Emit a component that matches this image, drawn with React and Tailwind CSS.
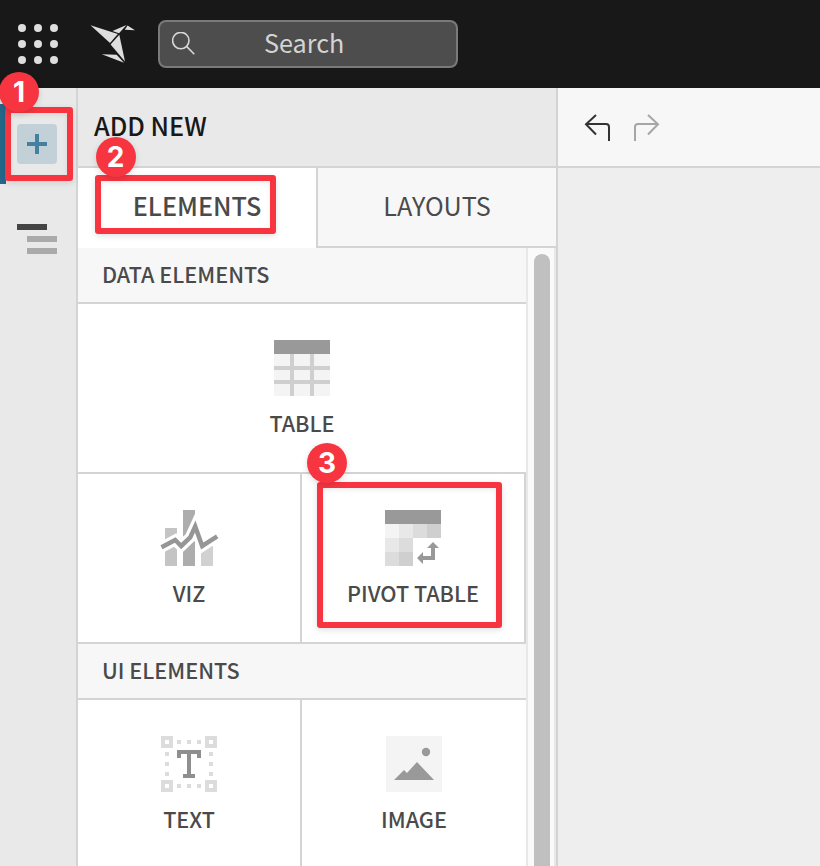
import React from 'react';

const sans = "font-['Noto_Sans_CJK_SC','Noto_Sans',sans-serif]";

function AppGrid() {
  const xs = [22, 38, 54];
  const ys = [28, 44, 60];
  return (
    <svg className="block h-[88px] w-20" viewBox="0 0 80 88" fill="#dedede">
      {ys.map((y) => xs.map((x) => <circle key={x + '-' + y} cx={x} cy={y} r="4" />))}
    </svg>
  );
}

function Bird() {
  return (
    <svg className="h-12 w-12" viewBox="88 20 48 48" fill="#dedede">
      <path d="M90.5 25.2 L117.8 34 L110 43 Z" />
      <path d="M112.5 31 L126.5 25 L119 33.2 Z" />
      <path d="M127.5 25.6 L135 30.2 L124.8 29.8 Z" />
      <path d="M119.3 34.8 L125 61.5 L110.6 44.5 Z" />
      <path d="M101.8 54.3 L116.6 54.8 L124 62.8 Z" />
    </svg>
  );
}

function Badge({ n, className }) {
  return (
    <div className={'absolute z-20 flex size-10 items-center justify-center rounded-full bg-[#f73541] font-[Inter,sans-serif] text-[28px] leading-none font-bold text-white shadow-[0_2px_6px_rgba(0,0,0,0.14)] ' + className}>
      {n}
    </div>
  );
}

function Frame({ className }) {
  return (
    <div className={'absolute z-10 rounded-[3px] shadow-[0_2px_6px_rgba(0,0,0,0.12)] ' + className}>
      <div className="h-full w-full rounded-[3px] border-[6px] border-[#f73541] shadow-[inset_0_2px_5px_rgba(0,0,0,0.08)]" />
    </div>
  );
}

function TableIcon() {
  return (
    <svg className="size-14" viewBox="0 0 56 56" shapeRendering="crispEdges">
      <path fill="#f4f4f4" d="M0 14h56v42H0z" />
      <path fill="#cfcfcf" d="M16 14h4v42h-4zM36 14h4v42h-4zM0 26h56v4H0zM0 40h56v4H0z" />
      <path fill="#999" d="M0 0h56v14H0z" />
    </svg>
  );
}

function VizIcon() {
  return (
    <svg className="size-14 overflow-visible" viewBox="0 0 56 56">
      <path fill="#c4c4c4" d="M4 18h12v38H4z" />
      <path fill="#adadad" d="M22 0h12v56H22z" />
      <path fill="#d1d1d1" d="M40 36h12v20H40z" />
      <path fill="none" stroke="#fff" strokeWidth="11" d="M.2 37.5 14.2 30 20.2 36 29.2 27.5 34.2 16.5 41.2 36 56.5 26" />
      <path fill="none" stroke="#969696" strokeWidth="4.5" d="M.5 37.3 14.2 30 20.2 36 29.2 27.5 34.2 16.5 41.2 36 56.2 26.3" />
    </svg>
  );
}

function PivotIcon() {
  return (
    <svg className="size-14" viewBox="0 0 56 56">
      <path fill="#999" d="M0 0h56v14H0z" />
      <path fill="#f4f4f4" d="M0 14h14v14H0z" />
      <path fill="#e8e8e8" d="M14 14h14v14H14zM0 28h14v14H0z" />
      <path fill="#dcdcdc" d="M28 14h14v14H28zM14 28h14v14H14zM0 42h14v14H0z" />
      <path fill="#cfcfcf" d="M42 14h14v14H42zM14 42h14v14H14z" />
      <path fill="#999" d="M48 32l6 6h-4v12H38v4l-6-6 6-6v4h8V38h-4z" />
    </svg>
  );
}

function TextIcon() {
  return (
    <svg className="size-14" viewBox="0 0 56 56" shapeRendering="crispEdges">
      <path fill="none" stroke="#dcdcdc" strokeWidth="4" d="M2 2h8v8H2zM46 2h8v8h-8zM2 46h8v8H2zM46 46h8v8h-8z" />
      <path fill="#dcdcdc" d="M16 4h4v4h-4zM26 4h4v4h-4zM36 4h4v4h-4zM16 48h4v4h-4zM26 48h4v4h-4zM36 48h4v4h-4zM4 16h4v4H4zM4 26h4v4H4zM4 36h4v4H4zM48 16h4v4h-4zM48 26h4v4h-4zM48 36h4v4h-4z" />
      <path fill="#8f8f8f" d="M16 14h24v8h-4v-4h-6v20h4v4H22v-4h4V18h-6v4h-4z" />
    </svg>
  );
}

function ImageIcon() {
  return (
    <svg className="size-14" viewBox="0 0 56 56">
      <path fill="#f4f4f4" d="M0 0h56v56H0z" />
      <circle cx="40" cy="16" r="4.2" fill="#999" />
      <path fill="#999" d="M8 44 18 34l3 3 10-11 17 18z" />
    </svg>
  );
}

function Cell({ icon, label, className = '' }) {
  return (
    <div className={'flex flex-col items-center bg-white pt-9 ' + className}>
      {icon}
      <span className="mt-[11px] text-[21.6px] leading-8 font-medium whitespace-nowrap">{label}</span>
    </div>
  );
}

function SectionTitle({ children }) {
  return (
    <div className="flex h-14 shrink-0 items-center border-b-2 border-[#d4d4d4] bg-[#f7f7f7] pb-0.5 pl-6 text-[21.6px] leading-8 font-medium">
      {children}
    </div>
  );
}

export default function App() {
  return (
    <div className={'relative flex h-[866px] w-[820px] flex-col overflow-hidden bg-[#eee] text-[#4a4a4a] ' + sans}>
      <header className="flex h-[88px] shrink-0 items-center bg-[#181818]">
        <AppGrid />
        <div className="mr-[22px] ml-2"><Bird /></div>
        <div className="flex h-12 w-[300px] items-center rounded-lg border-2 border-[#7a7a7a] bg-[#4d4d4d]">
          <svg className="ml-3 h-6 w-6" viewBox="0 0 24 24" fill="none" stroke="#d8d8d8" strokeWidth="1.6">
            <circle cx="8.8" cy="8.6" r="8.2" />
            <path d="M14.6 14.4 22.3 22.2" />
          </svg>
          <span className="ml-[68px] pb-1 text-[25.2px] leading-8 text-[#d4d4d4]">Search</span>
        </div>
      </header>

      <div className="flex min-h-0 flex-1">
        <aside className="w-[78px] shrink-0 border-r-2 border-[#d4d4d4] bg-[#e9e9e9] pt-4">
          <div className="flex h-20 items-center border-l-6 border-[#25688b] pl-[11px]">
            <button className="flex size-10 items-center justify-center rounded bg-[#c2d0d8]">
              <svg className="size-5" viewBox="0 0 20 20" fill="#4580a0"><path d="M8 0h4v8h8v4h-8v8H8v-8H0V8h8z" /></svg>
            </button>
          </div>
          <div className="mt-10 ml-[17px] flex w-10 flex-col gap-1.5">
            <div className="h-1.5 w-[30px] bg-[#444]" />
            <div className="ml-2.5 h-1.5 bg-[#aaa]" />
            <div className="ml-2.5 h-1.5 bg-[#aaa]" />
          </div>
        </aside>

        <section className="flex w-[480px] shrink-0 flex-col border-r-2 border-[#d4d4d4]">
          <h2 className="flex h-20 shrink-0 items-center border-b-2 border-[#d4d4d4] bg-[#e9e9e9] pb-1 pl-4 text-[25.2px] leading-8 font-medium text-[#181818]">ADD NEW</h2>
          <div className="flex h-20 shrink-0 text-[25.2px] leading-8">
            <div className="flex w-[238px] items-center justify-center bg-white pb-1.5 font-medium">ELEMENTS</div>
            <div className="flex flex-1 items-center justify-center border-b-2 border-l-2 border-[#d4d4d4] bg-[#f7f7f7] pb-1">LAYOUTS</div>
          </div>
          <div className="flex min-h-0 flex-1">
            <div className="flex w-[448px] flex-col">
              <SectionTitle>DATA ELEMENTS</SectionTitle>
              <Cell icon={<TableIcon />} label="TABLE" className="h-[170px] border-b-2 border-[#d4d4d4]" />
              <div className="grid h-[170px] shrink-0 grid-cols-2 border-b-2 border-[#d4d4d4]">
                <Cell icon={<VizIcon />} label="VIZ" className="border-r-2 border-[#d4d4d4]" />
                <Cell icon={<PivotIcon />} label="PIVOT TABLE" className="border-r-2 border-[#d4d4d4]" />
              </div>
              <SectionTitle>UI ELEMENTS</SectionTitle>
              <div className="grid flex-1 grid-cols-2">
                <Cell icon={<TextIcon />} label="TEXT" className="border-r-2 border-[#d4d4d4]" />
                <Cell icon={<ImageIcon />} label="IMAGE" />
              </div>
            </div>
            <div className="flex flex-1 border-x-2 border-[#e8e8e8] bg-[#fafafa] pt-1.5 pl-1.5">
              <div className="w-4 rounded-t-full bg-[#c0c0c0]" />
            </div>
          </div>
        </section>

        <main className="flex-1">
          <div className="flex h-20 items-center border-b-2 border-[#d4d4d4] bg-[#f7f7f7] pl-6">
            <svg className="h-8 w-20" viewBox="582 111 80 32" fill="none" strokeWidth="2">
              <path stroke="#333" d="M596 115 586 124.2 596 134.5M586 124H606Q609 124 609 127V141" />
              <path stroke="#a6a6a6" d="M648 115 658 124.2 648 134.5M658 124H638Q635 124 635 127V141" />
            </svg>
          </div>
        </main>
      </div>

      <Frame className="top-[107px] left-[5px] h-[74px] w-[68px]" />
      <Frame className="top-[175px] left-[95px] h-[59px] w-[181px]" />
      <Frame className="top-[482px] left-[317px] h-[146px] w-[185px]" />
      <Badge n="1" className="top-[72px] left-[-1px]" />
      <Badge n="2" className="top-[136.5px] left-[95.5px]" />
      <Badge n="3" className="top-[443px] left-[307px]" />
    </div>
  );
}
